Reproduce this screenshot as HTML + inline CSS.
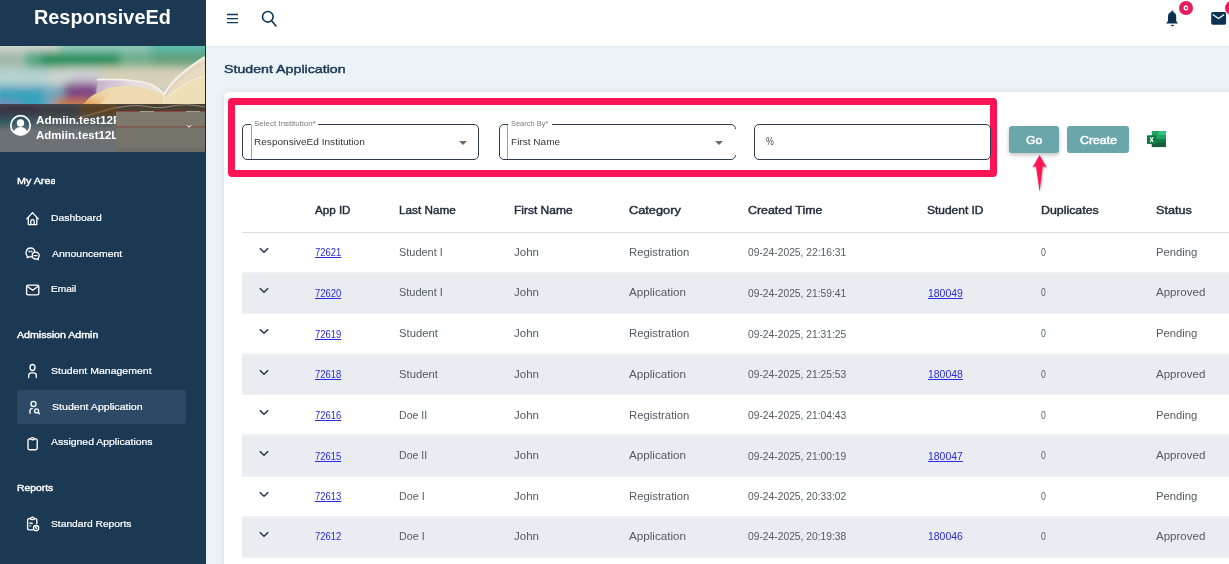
<!DOCTYPE html>
<html><head><meta charset="utf-8"><title>Student Application</title>
<style>
html,body{margin:0;padding:0}
body{width:1229px;height:564px;overflow:hidden;position:relative;background:#ebf3f7;font-family:'Liberation Sans',sans-serif}
.a{position:absolute}
.t{position:absolute;white-space:nowrap;line-height:1em;font-family:'Liberation Sans',sans-serif}
#side{left:0;top:0;width:206px;height:564px;background:#1c3954}
#hero{left:0;top:46px;width:205px;height:106px;overflow:hidden;background:#c9cfc6}
#hero .b{position:absolute;filter:blur(5px)}
#hdr{left:206px;top:0;width:1023px;height:46px;background:#fff;box-shadow:0 1px 1.5px rgba(0,0,0,.045)}
#card{left:224px;top:92px;width:1100px;height:600px;background:#fff;border-radius:5px;box-shadow:0 0 7px rgba(0,0,0,.09)}
#red{left:227.6px;top:97.8px;width:755.8px;height:65.3px;border:7.5px solid #ff1352;border-radius:4px}
.inp{position:absolute;border:1.3px solid #2f3b4c;border-radius:5px;box-sizing:border-box;background:#fff}
.btn{position:absolute;background:#6aa6ac;border-radius:3px;box-shadow:0 2px 4px rgba(0,0,0,.25)}
.row{position:absolute;left:242px;width:990px;background:#e9edf1;border-top:1px solid #f1f3f5;border-bottom:1px solid #f1f3f5;box-sizing:border-box}

</style></head><body>
<div id="side" class="a"></div>
<svg id="hero" class="a" style="left:0;top:46px" width="205" height="106" viewBox="0 0 205 106">
 <defs>
  <filter id="bl" x="-20%" y="-20%" width="140%" height="140%"><feGaussianBlur stdDeviation="4.5"/></filter>
  <filter id="bl2" x="-20%" y="-20%" width="140%" height="140%"><feGaussianBlur stdDeviation="3"/></filter>
  <linearGradient id="og" x1="0" y1="1" x2="0.6" y2="0"><stop offset="0" stop-color="#e4a050"/><stop offset="1" stop-color="#efdab0" stop-opacity="0"/></linearGradient>
  <linearGradient id="lav" x1="0" y1="0" x2="1" y2="0"><stop offset="0" stop-color="#c8b2cc"/><stop offset=".55" stop-color="#e6dbe0"/><stop offset="1" stop-color="#f0e4cc"/></linearGradient>
  <filter id="bl1"><feGaussianBlur stdDeviation=".5"/></filter>
 </defs>
 <rect width="205" height="106" fill="#c3cfc8"/>
 <g filter="url(#bl)">
  <rect x="-10" y="-10" width="80" height="18" fill="#d3d8d2"/>
  <rect x="60" y="-10" width="160" height="16" fill="#8fcbbb"/>
  <rect x="150" y="-10" width="70" height="16" fill="#5cbcac"/>
  <rect x="-10" y="5" width="32" height="17" fill="#a3b8a8"/>
  <rect x="24" y="5" width="40" height="17" fill="#5aa884"/>
  <rect x="40" y="6" width="85" height="15" fill="#23905c"/>
  <rect x="120" y="5" width="34" height="16" fill="#6fae8c"/>
  <rect x="152" y="6" width="60" height="15" fill="#62a07c"/>
  <rect x="-10" y="22" width="62" height="20" fill="#b6d2d0"/>
  <rect x="50" y="22" width="50" height="18" fill="#cdd6cf"/>
  <rect x="72" y="30" width="30" height="12" fill="#cbbfd6"/>
  <rect x="100" y="21" width="110" height="22" fill="#d6d1b8"/>
  <rect x="-10" y="40" width="60" height="26" fill="#38a2bc"/>
  <rect x="-10" y="56" width="30" height="10" fill="#7a88b8"/>
  <rect x="44" y="40" width="20" height="22" fill="#6ea6bb"/>
  <rect x="64" y="37" width="36" height="18" fill="#7d4585"/>
  <rect x="54" y="53" width="40" height="10" fill="#c8742e"/>
  <rect x="-10" y="0" width="3" height="60" fill="#e0d0b0"/>
 </g>
 <!-- book -->
 <g filter="url(#bl1)">
  <path d="M84 58 C90 50 96 46 112 41 C130 38 150 42 164 49 L164 58 Z" fill="#efdab0"/>
  <path d="M98 34 C120 33 142 35 152 39 C158 42 162 46 164 49 C150 42 130 38 112 41 C104 43 99 45 96 47 Z" fill="url(#lav)"/>
  <path d="M97 33.6 C122 33 143 34.5 152.5 39 C158 42 162 46 164 49" fill="none" stroke="#f6f2f2" stroke-width="1.6"/>
  <path d="M164 49 C170 36 184 24 205 11 L205 58 L164 58 Z" fill="#e7dcc0"/>
  <path d="M166 52 C172 44 185 36 205 30 L205 58 L166 58 Z" fill="#efdfb6"/>
  <path d="M164 49 C170 36 184 24 204.5 11" fill="none" stroke="#f7f3f0" stroke-width="1.8"/>
  <path d="M165.5 50 C172 38 186 27 205 16" fill="none" stroke="#e3b6b0" stroke-width=".7"/>
  <path d="M167 53 C174 44 186 36 205 29.5" fill="none" stroke="#f3efe8" stroke-width="1"/>
  <path d="M164 49 L164.5 58" stroke="#f8f0e0" stroke-width="1"/>
  <path d="M84 58 C90 50 96 46 112 41 L118 41 L100 58 Z" fill="url(#og)"/>
 </g>
 <!-- lower (under overlay), final colors -->
 <rect x="0" y="58" width="205" height="48" fill="#6c7176"/>
 <clipPath id="lowclip"><rect x="0" y="58" width="205" height="48"/></clipPath>
 <g clip-path="url(#lowclip)"><g filter="url(#bl2)">
  <rect x="-5" y="56" width="45" height="17" fill="#3b3547"/>
  <rect x="38" y="56" width="45" height="17" fill="#3a3c42"/>
  <rect x="80" y="56" width="40" height="17" fill="#5a4124"/>
  <rect x="-5" y="71" width="40" height="9" fill="#2f5a62"/>
  <rect x="33" y="71" width="85" height="9" fill="#4b585c"/>
 </g></g>
 <path d="M75 72 L118 60 L118 62 L78 73 Z" fill="#8a6a40" opacity=".7"/>
 <rect x="116" y="58" width="89" height="8" fill="#4a4034"/>
 <path d="M116 62 C130 59 140 59 150 61 C160 63 170 60 180 59 C190 58 198 60 205 61" fill="none" stroke="#8f8a7c" stroke-width="1"/>
 <rect x="116" y="65" width="89" height="1.2" fill="#8c4a3c"/>
 <rect x="140" y="65" width="14" height="1.2" fill="#a7a092"/>
 <rect x="186" y="65" width="14" height="1.2" fill="#a7a092"/>
 <rect x="116" y="66" width="89" height="14.5" fill="#7c786c"/>
 <rect x="116" y="80.3" width="89" height="1.3" fill="#8a4b38"/>
 <rect x="116" y="81.6" width="89" height="20.5" fill="#76736b"/>
 <rect x="116" y="102" width="89" height="4" fill="#6f6c68"/>
</svg>
<div id="hdr" class="a"></div>
<!-- hero overlay -->
<div class="a" style="left:205px;top:46px;width:1px;height:106px;background:#0f2740"></div>
<svg class="a" style="left:8px;top:113px" width="25" height="25" viewBox="0 0 25 25">
 <defs><clipPath id="av"><circle cx="12.5" cy="12.4" r="9.7"/></clipPath></defs>
 <circle cx="12.5" cy="12.4" r="9.7" fill="none" stroke="#fff" stroke-width="1.7"/>
 <circle cx="12.5" cy="10" r="3.7" fill="#fff"/>
 <ellipse cx="12.5" cy="21" rx="7.3" ry="7" fill="#fff" clip-path="url(#av)"/>
</svg>
<svg class="a" style="left:185px;top:123px" width="8" height="6" viewBox="0 0 8 6"><path d="M2 2 L4.2 4.3 L6.4 2" fill="none" stroke="#fff" stroke-width="1"/></svg>
<!-- active nav -->
<div class="a" style="left:17px;top:390px;width:169px;height:34px;background:#2c4965;border-radius:3px"></div>
<!-- nav icons -->
<svg class="a" style="left:22px;top:208px" width="22" height="22" viewBox="0 0 22 22" fill="none" stroke="#fff" stroke-width="1.3" stroke-linejoin="round" stroke-linecap="round">
 <path d="M4.8 10.9 L10.5 4.6 L16.3 10.9"/><path d="M6.3 9.6 V16.6 H14.8 V9.6"/><path d="M8.8 16.6 V13.4 A1.7 1.7 0 0 1 12.2 13.4 V16.6"/>
</svg>
<svg class="a" style="left:22px;top:244px" width="22" height="22" viewBox="0 0 22 22" fill="none" stroke="#fff" stroke-width="1.3" stroke-linejoin="round" stroke-linecap="round">
 <path d="M10.2 12.6 C8.2 13.2 6.8 13 5.4 12.9 L5.3 13.6 L5 11.6 C3.8 10.4 3.9 8.8 4.2 7.6 C4.8 5.2 7 4 8.6 4 C10.8 4 12.8 5.6 12.9 8"/>
 <circle cx="7.4" cy="7.5" r=".35" fill="#fff"/><circle cx="9.6" cy="7.5" r=".35" fill="#fff"/>
 <path d="M13.6 8.2 C15.8 8.2 17.3 9.8 17.2 11.8 C17.1 13 16.5 13.8 16.1 14.2 L16.3 15.8 L14.6 14.9 C12.2 15.4 10.2 14 10.2 11.7 C10.2 9.6 11.8 8.2 13.6 8.2 Z"/>
 <path d="M12 11.6 H15"/>
</svg>
<svg class="a" style="left:22px;top:279px" width="22" height="22" viewBox="0 0 22 22" fill="none" stroke="#fff" stroke-width="1.35" stroke-linejoin="round" stroke-linecap="round">
 <rect x="4.6" y="6.1" width="12.2" height="9.7" rx="1.4"/><path d="M5.2 7.2 L10.7 11.3 L16.2 7.2"/>
</svg>
<svg class="a" style="left:22px;top:360px" width="22" height="22" viewBox="0 0 22 22" fill="none" stroke="#fff" stroke-width="1.35" stroke-linecap="round">
 <ellipse cx="10.5" cy="7.5" rx="2.5" ry="3"/><path d="M6.7 17.5 V15.6 C6.7 13.8 7.8 12.8 9.6 12.8 H11.4 C13.2 12.8 14.3 13.8 14.3 15.6 V17.5"/>
</svg>
<svg class="a" style="left:22px;top:396px" width="22" height="22" viewBox="0 0 22 22" fill="none" stroke="#fff" stroke-width="1.35" stroke-linecap="round">
 <circle cx="11.5" cy="7.9" r="2.5"/><path d="M8 17.2 V15 C8 13.6 8.8 12.6 10.2 12.4"/><circle cx="14.6" cy="14.9" r="2"/><path d="M16.1 16.4 L17.5 17.7"/>
</svg>
<svg class="a" style="left:22px;top:433px" width="22" height="22" viewBox="0 0 22 22" fill="none" stroke="#fff" stroke-width="1.35" stroke-linejoin="round">
 <path d="M8.2 5.9 H7.4 C6.6 5.9 6 6.5 6 7.3 V15.3 C6 16.1 6.6 16.7 7.4 16.7 H13.8 C14.6 16.7 15.2 16.1 15.2 15.3 V7.3 C15.2 6.5 14.6 5.9 13.8 5.9 H12.6"/>
 <path d="M8.2 5.9 C8.6 5.5 9.2 5.3 9.4 5 C9.8 4.4 11.4 4.4 11.8 5 C12 5.3 12.4 5.6 12.6 5.9 C12 7 9 7 8.2 5.9 Z"/>
</svg>
<svg class="a" style="left:22px;top:513px" width="22" height="22" viewBox="0 0 22 22" fill="none" stroke="#fff" stroke-width="1.35" stroke-linejoin="round" stroke-linecap="round">
 <path d="M8 5.6 H7 C6.2 5.6 5.6 6.2 5.6 7 V15.4 C5.6 16.2 6.2 16.8 7 16.8 H10.8"/><path d="M12.8 5.6 H13.6 C14.4 5.6 14.8 6.2 14.8 7 V10.8"/>
 <path d="M8 5.6 C8.4 5.2 8.9 5 9.2 4.6 C9.7 4 11.2 4 11.6 4.6 C11.9 5 12.4 5.2 12.8 5.6 C12.2 6.8 8.6 6.8 8 5.6 Z"/>
 <path d="M7.9 10.2 H10.2"/><path d="M7.9 12.8 H8.6"/>
 <circle cx="14.1" cy="15.1" r="2.6"/><path d="M13.6 13.9 L14.4 15.3"/>
</svg>
<!-- header icons -->
<svg class="a" style="left:222px;top:8px" width="20" height="20" viewBox="0 0 20 20" stroke="#0d3556" stroke-width="1.3">
 <path d="M5 6.5 H16 M5 10.6 H16 M5 14.6 H16"/>
</svg>
<svg class="a" style="left:258px;top:7px" width="22" height="22" viewBox="0 0 22 22" fill="none" stroke="#0d3556" stroke-width="1.6" stroke-linecap="round">
 <circle cx="9.8" cy="9.8" r="5.3"/><path d="M13.8 14 L18 19"/>
</svg>
<svg class="a" style="left:1160px;top:0" width="30" height="30" viewBox="0 0 30 30">
 <path fill="#0b3350" d="M12.5 10.4 C13.1 10.4 13.5 10.9 13.5 11.4 L13.4 12.3 C15.2 12.8 16.2 14.3 16.2 16.5 V20 C16.2 21.2 16.8 22.1 18.1 23.4 H6 C7.4 22.1 8 21.2 8 20 V16.5 C8 14.3 9 12.8 10.8 12.3 L11.5 11.4 C11.5 10.9 11.9 10.4 12.5 10.4 Z"/>
 <ellipse cx="12.5" cy="25.5" rx="1.6" ry=".7" fill="#0b3350"/>
</svg>
<svg class="a" style="left:1205px;top:6px" width="24" height="24" viewBox="0 0 24 24">
 <rect x="6.2" y="6" width="14.9" height="12.7" rx="1.6" fill="#0b3350"/>
 <path d="M7.8 8.4 L13.5 12.6 L19.2 8.4" fill="none" stroke="#fff" stroke-width="1.2"/>
</svg>
<div class="a" style="left:1179px;top:1.3px;width:13.8px;height:13.8px;border-radius:50%;background:#e91b5f"></div>
<div class="a" style="left:1225px;top:1.3px;width:13.8px;height:13.8px;border-radius:50%;background:#e91b5f"></div>
<svg class="a" style="left:1179px;top:1.3px" width="14" height="14" viewBox="0 0 14 14"><ellipse cx="6.9" cy="6.9" rx="1.7" ry="1.9" fill="none" stroke="#fff" stroke-width="1.3"/></svg>
<!-- excel -->
<svg class="a" style="z-index:5;left:1147px;top:130.6px" width="20" height="17" viewBox="0 0 20 17">
 <rect x="4.8" y="0" width="14.2" height="16.1" rx=".6" fill="#21a366"/>
 <rect x="11.8" y="0" width="7.2" height="4" fill="#33c481"/>
 <rect x="4.8" y="8" width="14.2" height="4" fill="#107c41"/>
 <rect x="4.8" y="12" width="14.2" height="4.1" fill="#185c37"/>
 <rect x="0" y="4.2" width="9.3" height="8.9" rx=".6" fill="#107c41"/>
 <path d="M3.2 6.4 L6.1 10.9 M6.1 6.4 L3.2 10.9" stroke="#fff" stroke-width="1.1"/>
</svg>
<!-- arrow -->
<svg class="a" style="z-index:5;left:1030px;top:154px;filter:drop-shadow(1px 1px 1px rgba(0,0,0,.25))" width="20" height="40" viewBox="0 0 20 40">
 <path fill="#ff1654" d="M9.5 1.1 L16.7 13.4 L12.9 12.2 L9.6 37.7 L5.9 12.2 L2.5 13.4 Z"/>
</svg>

<div id="card" class="a"></div>
<div id="red" class="a"></div>
<!-- input 1 -->
<div class="inp" style="left:242.4px;top:124.3px;width:236.4px;height:35.5px"></div>
<div class="a" style="left:251px;top:120px;width:67px;height:6px;background:#fff"></div>
<div class="a" style="left:251.2px;top:125px;width:1px;height:34px;background:#9aa3ad"></div>
<!-- input 2 -->
<div class="inp" style="left:498.5px;top:124.3px;width:237px;height:35.5px"></div>
<div class="a" style="left:733.5px;top:129px;width:3px;height:26px;background:#fff"></div>
<div class="a" style="left:507.5px;top:120px;width:44px;height:6px;background:#fff"></div>
<div class="a" style="left:507.3px;top:125px;width:1px;height:34px;background:#9aa3ad"></div>
<!-- input 3 -->
<div class="inp" style="left:754.1px;top:124.1px;width:236.7px;height:35.5px"></div>
<!-- dropdown carets -->
<div class="a" style="left:459.2px;top:141px;width:0;height:0;border-left:4px solid transparent;border-right:4px solid transparent;border-top:4px solid #6b6b6b"></div>
<div class="a" style="left:715.3px;top:141px;width:0;height:0;border-left:4px solid transparent;border-right:4px solid transparent;border-top:4px solid #6b6b6b"></div>
<!-- buttons -->
<div class="btn" style="left:1008.7px;top:126px;width:50px;height:26.8px"></div>
<div class="btn" style="left:1067.1px;top:126px;width:61.8px;height:26.8px;box-shadow:0 0 6px rgba(0,0,0,.06)"></div>
<!-- table -->
<div class="a" style="left:242px;top:232px;width:990px;height:1.2px;background:#dadee3"></div>
<div class="a" style="left:242px;top:271.93px;width:990px;height:1px;background:#eef0f3"></div>
<svg class="a" style="left:258px;top:246.80px" width="12" height="8" viewBox="0 0 12 8"><path d="M1.8 1.3 L6 5.3 L10.2 1.3" fill="none" stroke="#24344a" stroke-width="1.5"/></svg>
<div class="row" style="top:272.83px;height:41.23px"></div>
<svg class="a" style="left:258px;top:287.43px" width="12" height="8" viewBox="0 0 12 8"><path d="M1.8 1.3 L6 5.3 L10.2 1.3" fill="none" stroke="#24344a" stroke-width="1.5"/></svg>
<div class="a" style="left:242px;top:353.19px;width:990px;height:1px;background:#eef0f3"></div>
<svg class="a" style="left:258px;top:328.06px" width="12" height="8" viewBox="0 0 12 8"><path d="M1.8 1.3 L6 5.3 L10.2 1.3" fill="none" stroke="#24344a" stroke-width="1.5"/></svg>
<div class="row" style="top:354.09px;height:41.23px"></div>
<svg class="a" style="left:258px;top:368.69px" width="12" height="8" viewBox="0 0 12 8"><path d="M1.8 1.3 L6 5.3 L10.2 1.3" fill="none" stroke="#24344a" stroke-width="1.5"/></svg>
<div class="a" style="left:242px;top:434.45px;width:990px;height:1px;background:#eef0f3"></div>
<svg class="a" style="left:258px;top:409.32px" width="12" height="8" viewBox="0 0 12 8"><path d="M1.8 1.3 L6 5.3 L10.2 1.3" fill="none" stroke="#24344a" stroke-width="1.5"/></svg>
<div class="row" style="top:435.35px;height:41.23px"></div>
<svg class="a" style="left:258px;top:449.95px" width="12" height="8" viewBox="0 0 12 8"><path d="M1.8 1.3 L6 5.3 L10.2 1.3" fill="none" stroke="#24344a" stroke-width="1.5"/></svg>
<div class="a" style="left:242px;top:515.71px;width:990px;height:1px;background:#eef0f3"></div>
<svg class="a" style="left:258px;top:490.58px" width="12" height="8" viewBox="0 0 12 8"><path d="M1.8 1.3 L6 5.3 L10.2 1.3" fill="none" stroke="#24344a" stroke-width="1.5"/></svg>
<div class="row" style="top:516.61px;height:41.23px"></div>
<svg class="a" style="left:258px;top:531.21px" width="12" height="8" viewBox="0 0 12 8"><path d="M1.8 1.3 L6 5.3 L10.2 1.3" fill="none" stroke="#24344a" stroke-width="1.5"/></svg>

<div class="t" style="left:33.60px;top:7.99px;font-size:19.5px;font-weight:700;color:#ffffff;"><span style="display:inline-block;transform:scaleX(1.0179);transform-origin:0 0;">ResponsiveEd</span></div>
<div class="t" style="left:36.10px;top:115.29px;font-size:11px;font-weight:700;color:#ffffff;width:79.5px;overflow:hidden;"><span style="display:inline-block;transform:scaleX(1.0690);transform-origin:0 0;">Admiin.test12F</span></div>
<div class="t" style="left:36.10px;top:129.59px;font-size:11px;font-weight:700;color:#ffffff;width:79.5px;overflow:hidden;"><span style="display:inline-block;transform:scaleX(1.0436);transform-origin:0 0;">Admiin.test12L</span></div>
<div class="t" style="left:17.00px;top:177.43px;font-size:9.3px;font-weight:400;color:#ffffff;width:37.5px;overflow:hidden;"><span style="display:inline-block;transform:scaleX(1.1551);transform-origin:0 0;-webkit-text-stroke:.4px #fff;">My Area</span></div>
<div class="t" style="left:51.40px;top:212.87px;font-size:9.6px;font-weight:400;color:#ffffff;"><span style="display:inline-block;transform:scaleX(1.0802);transform-origin:0 0;-webkit-text-stroke:.2px #fff;">Dashboard</span></div>
<div class="t" style="left:51.50px;top:249.07px;font-size:9.6px;font-weight:400;color:#ffffff;"><span style="display:inline-block;transform:scaleX(1.0876);transform-origin:0 0;-webkit-text-stroke:.2px #fff;">Announcement</span></div>
<div class="t" style="left:51.10px;top:283.87px;font-size:9.6px;font-weight:400;color:#ffffff;"><span style="display:inline-block;transform:scaleX(1.0542);transform-origin:0 0;-webkit-text-stroke:.2px #fff;">Email</span></div>
<div class="t" style="left:17.00px;top:331.03px;font-size:9.3px;font-weight:400;color:#ffffff;"><span style="display:inline-block;transform:scaleX(1.1401);transform-origin:0 0;-webkit-text-stroke:.4px #fff;">Admission Admin</span></div>
<div class="t" style="left:51.20px;top:366.27px;font-size:9.6px;font-weight:400;color:#ffffff;"><span style="display:inline-block;transform:scaleX(1.0965);transform-origin:0 0;-webkit-text-stroke:.2px #fff;">Student Management</span></div>
<div class="t" style="left:52.10px;top:401.87px;font-size:9.6px;font-weight:400;color:#ffffff;"><span style="display:inline-block;transform:scaleX(1.1028);transform-origin:0 0;-webkit-text-stroke:.2px #fff;">Student Application</span></div>
<div class="t" style="left:51.20px;top:437.47px;font-size:9.6px;font-weight:400;color:#ffffff;"><span style="display:inline-block;transform:scaleX(1.0884);transform-origin:0 0;-webkit-text-stroke:.2px #fff;">Assigned Applications</span></div>
<div class="t" style="left:17.10px;top:483.63px;font-size:9.3px;font-weight:400;color:#ffffff;"><span style="display:inline-block;transform:scaleX(1.1148);transform-origin:0 0;-webkit-text-stroke:.4px #fff;">Reports</span></div>
<div class="t" style="left:51.30px;top:518.87px;font-size:9.6px;font-weight:400;color:#ffffff;"><span style="display:inline-block;transform:scaleX(1.0691);transform-origin:0 0;-webkit-text-stroke:.2px #fff;">Standard Reports</span></div>
<div class="t" style="left:224.40px;top:64.13px;font-size:11.3px;font-weight:400;color:#1d3a56;"><span style="display:inline-block;transform:scaleX(1.2571);transform-origin:0 0;-webkit-text-stroke:.45px #1d3a56;">Student Application</span></div>
<div class="t" style="left:253.60px;top:119.97px;font-size:7px;font-weight:400;color:#7a7a7a;"><span style="display:inline-block;transform:scaleX(1.1425);transform-origin:0 0;">Select Institution*</span></div>
<div class="t" style="left:253.60px;top:137.83px;font-size:9.3px;font-weight:400;color:#333333;"><span style="display:inline-block;transform:scaleX(1.0828);transform-origin:0 0;">ResponsiveEd Institution</span></div>
<div class="t" style="left:510.60px;top:119.97px;font-size:7px;font-weight:400;color:#7a7a7a;"><span style="display:inline-block;transform:scaleX(1.0648);transform-origin:0 0;">Search By*</span></div>
<div class="t" style="left:510.60px;top:137.83px;font-size:9.3px;font-weight:400;color:#333333;"><span style="display:inline-block;transform:scaleX(1.0821);transform-origin:0 0;">First Name</span></div>
<div class="t" style="left:765.60px;top:136.63px;font-size:10px;font-weight:400;color:#444444;"><span style="display:inline-block;transform:scaleX(0.8758);transform-origin:0 0;">%</span></div>
<div class="t" style="left:1025.90px;top:134.91px;font-size:10.5px;font-weight:400;color:#ffffff;"><span style="display:inline-block;transform:scaleX(1.1701);transform-origin:0 0;-webkit-text-stroke:.45px #fff;">Go</span></div>
<div class="t" style="left:1079.60px;top:134.91px;font-size:10.5px;font-weight:400;color:#ffffff;"><span style="display:inline-block;transform:scaleX(1.1740);transform-origin:0 0;-webkit-text-stroke:.45px #fff;">Create</span></div>
<div class="t" style="left:314.90px;top:206.44px;font-size:10px;font-weight:400;color:#1f2b3a;"><span style="display:inline-block;transform:scaleX(1.1610);transform-origin:0 0;-webkit-text-stroke:.4px #1f2b3a;">App ID</span></div>
<div class="t" style="left:399.00px;top:206.44px;font-size:10px;font-weight:400;color:#1f2b3a;"><span style="display:inline-block;transform:scaleX(1.1725);transform-origin:0 0;-webkit-text-stroke:.4px #1f2b3a;">Last Name</span></div>
<div class="t" style="left:513.60px;top:206.44px;font-size:10px;font-weight:400;color:#1f2b3a;"><span style="display:inline-block;transform:scaleX(1.1982);transform-origin:0 0;-webkit-text-stroke:.4px #1f2b3a;">First Name</span></div>
<div class="t" style="left:629.40px;top:206.44px;font-size:10px;font-weight:400;color:#1f2b3a;"><span style="display:inline-block;transform:scaleX(1.2765);transform-origin:0 0;-webkit-text-stroke:.4px #1f2b3a;">Category</span></div>
<div class="t" style="left:747.60px;top:206.44px;font-size:10px;font-weight:400;color:#1f2b3a;"><span style="display:inline-block;transform:scaleX(1.2394);transform-origin:0 0;-webkit-text-stroke:.4px #1f2b3a;">Created Time</span></div>
<div class="t" style="left:927.40px;top:206.44px;font-size:10px;font-weight:400;color:#1f2b3a;"><span style="display:inline-block;transform:scaleX(1.1954);transform-origin:0 0;-webkit-text-stroke:.4px #1f2b3a;">Student ID</span></div>
<div class="t" style="left:1040.80px;top:206.44px;font-size:10px;font-weight:400;color:#1f2b3a;"><span style="display:inline-block;transform:scaleX(1.2355);transform-origin:0 0;-webkit-text-stroke:.4px #1f2b3a;">Duplicates</span></div>
<div class="t" style="left:1156.20px;top:206.44px;font-size:10px;font-weight:400;color:#1f2b3a;"><span style="display:inline-block;transform:scaleX(1.2624);transform-origin:0 0;-webkit-text-stroke:.4px #1f2b3a;">Status</span></div>
<div class="t" style="left:314.60px;top:247.23px;font-size:10.6px;font-weight:400;color:#2a2ae0;"><span style="display:inline-block;transform:scaleX(0.8925);transform-origin:0 0;text-decoration:underline;">72621</span></div>
<div class="t" style="left:399.00px;top:247.73px;font-size:10px;font-weight:400;color:#555b63;"><span style="display:inline-block;transform:scaleX(1.0941);transform-origin:0 0;">Student I</span></div>
<div class="t" style="left:513.60px;top:247.73px;font-size:10px;font-weight:400;color:#555b63;"><span style="display:inline-block;transform:scaleX(1.1527);transform-origin:0 0;">John</span></div>
<div class="t" style="left:629.40px;top:247.73px;font-size:10px;font-weight:400;color:#555b63;"><span style="display:inline-block;transform:scaleX(1.1319);transform-origin:0 0;">Registration</span></div>
<div class="t" style="left:747.60px;top:247.23px;font-size:10.6px;font-weight:400;color:#555b63;"><span style="display:inline-block;transform:scaleX(0.9701);transform-origin:0 0;">09-24-2025, 22:16:31</span></div>
<div class="t" style="left:1041.10px;top:247.73px;font-size:10px;font-weight:400;color:#555b63;"><span style="display:inline-block;transform:scaleX(0.8629);transform-origin:0 0;">0</span></div>
<div class="t" style="left:1156.20px;top:247.73px;font-size:10px;font-weight:400;color:#555b63;"><span style="display:inline-block;transform:scaleX(1.1280);transform-origin:0 0;">Pending</span></div>
<div class="t" style="left:314.60px;top:287.93px;font-size:10.6px;font-weight:400;color:#2a2ae0;"><span style="display:inline-block;transform:scaleX(0.8925);transform-origin:0 0;text-decoration:underline;">72620</span></div>
<div class="t" style="left:399.00px;top:288.44px;font-size:10px;font-weight:400;color:#555b63;"><span style="display:inline-block;transform:scaleX(1.0941);transform-origin:0 0;">Student I</span></div>
<div class="t" style="left:513.60px;top:288.44px;font-size:10px;font-weight:400;color:#555b63;"><span style="display:inline-block;transform:scaleX(1.1527);transform-origin:0 0;">John</span></div>
<div class="t" style="left:629.40px;top:288.44px;font-size:10px;font-weight:400;color:#555b63;"><span style="display:inline-block;transform:scaleX(1.1672);transform-origin:0 0;">Application</span></div>
<div class="t" style="left:747.60px;top:287.93px;font-size:10.6px;font-weight:400;color:#555b63;"><span style="display:inline-block;transform:scaleX(0.9701);transform-origin:0 0;">09-24-2025, 21:59:41</span></div>
<div class="t" style="left:927.60px;top:287.93px;font-size:10.6px;font-weight:400;color:#2a2ae0;"><span style="display:inline-block;transform:scaleX(0.9842);transform-origin:0 0;text-decoration:underline;">180049</span></div>
<div class="t" style="left:1041.10px;top:288.44px;font-size:10px;font-weight:400;color:#555b63;"><span style="display:inline-block;transform:scaleX(0.8629);transform-origin:0 0;">0</span></div>
<div class="t" style="left:1156.20px;top:288.44px;font-size:10px;font-weight:400;color:#555b63;"><span style="display:inline-block;transform:scaleX(1.1515);transform-origin:0 0;">Approved</span></div>
<div class="t" style="left:314.60px;top:328.63px;font-size:10.6px;font-weight:400;color:#2a2ae0;"><span style="display:inline-block;transform:scaleX(0.8925);transform-origin:0 0;text-decoration:underline;">72619</span></div>
<div class="t" style="left:399.00px;top:329.13px;font-size:10px;font-weight:400;color:#555b63;"><span style="display:inline-block;transform:scaleX(1.1251);transform-origin:0 0;">Student</span></div>
<div class="t" style="left:513.60px;top:329.13px;font-size:10px;font-weight:400;color:#555b63;"><span style="display:inline-block;transform:scaleX(1.1527);transform-origin:0 0;">John</span></div>
<div class="t" style="left:629.40px;top:329.13px;font-size:10px;font-weight:400;color:#555b63;"><span style="display:inline-block;transform:scaleX(1.1319);transform-origin:0 0;">Registration</span></div>
<div class="t" style="left:747.60px;top:328.63px;font-size:10.6px;font-weight:400;color:#555b63;"><span style="display:inline-block;transform:scaleX(0.9701);transform-origin:0 0;">09-24-2025, 21:31:25</span></div>
<div class="t" style="left:1041.10px;top:329.13px;font-size:10px;font-weight:400;color:#555b63;"><span style="display:inline-block;transform:scaleX(0.8629);transform-origin:0 0;">0</span></div>
<div class="t" style="left:1156.20px;top:329.13px;font-size:10px;font-weight:400;color:#555b63;"><span style="display:inline-block;transform:scaleX(1.1280);transform-origin:0 0;">Pending</span></div>
<div class="t" style="left:314.60px;top:369.43px;font-size:10.6px;font-weight:400;color:#2a2ae0;"><span style="display:inline-block;transform:scaleX(0.8925);transform-origin:0 0;text-decoration:underline;">72618</span></div>
<div class="t" style="left:399.00px;top:369.94px;font-size:10px;font-weight:400;color:#555b63;"><span style="display:inline-block;transform:scaleX(1.1251);transform-origin:0 0;">Student</span></div>
<div class="t" style="left:513.60px;top:369.94px;font-size:10px;font-weight:400;color:#555b63;"><span style="display:inline-block;transform:scaleX(1.1527);transform-origin:0 0;">John</span></div>
<div class="t" style="left:629.40px;top:369.94px;font-size:10px;font-weight:400;color:#555b63;"><span style="display:inline-block;transform:scaleX(1.1672);transform-origin:0 0;">Application</span></div>
<div class="t" style="left:747.60px;top:369.43px;font-size:10.6px;font-weight:400;color:#555b63;"><span style="display:inline-block;transform:scaleX(0.9701);transform-origin:0 0;">09-24-2025, 21:25:53</span></div>
<div class="t" style="left:927.60px;top:369.43px;font-size:10.6px;font-weight:400;color:#2a2ae0;"><span style="display:inline-block;transform:scaleX(0.9842);transform-origin:0 0;text-decoration:underline;">180048</span></div>
<div class="t" style="left:1041.10px;top:369.94px;font-size:10px;font-weight:400;color:#555b63;"><span style="display:inline-block;transform:scaleX(0.8629);transform-origin:0 0;">0</span></div>
<div class="t" style="left:1156.20px;top:369.94px;font-size:10px;font-weight:400;color:#555b63;"><span style="display:inline-block;transform:scaleX(1.1515);transform-origin:0 0;">Approved</span></div>
<div class="t" style="left:314.60px;top:410.13px;font-size:10.6px;font-weight:400;color:#2a2ae0;"><span style="display:inline-block;transform:scaleX(0.8925);transform-origin:0 0;text-decoration:underline;">72616</span></div>
<div class="t" style="left:399.00px;top:410.63px;font-size:10px;font-weight:400;color:#555b63;"><span style="display:inline-block;transform:scaleX(1.0567);transform-origin:0 0;">Doe II</span></div>
<div class="t" style="left:513.60px;top:410.63px;font-size:10px;font-weight:400;color:#555b63;"><span style="display:inline-block;transform:scaleX(1.1527);transform-origin:0 0;">John</span></div>
<div class="t" style="left:629.40px;top:410.63px;font-size:10px;font-weight:400;color:#555b63;"><span style="display:inline-block;transform:scaleX(1.1319);transform-origin:0 0;">Registration</span></div>
<div class="t" style="left:747.60px;top:410.13px;font-size:10.6px;font-weight:400;color:#555b63;"><span style="display:inline-block;transform:scaleX(0.9701);transform-origin:0 0;">09-24-2025, 21:04:43</span></div>
<div class="t" style="left:1041.10px;top:410.63px;font-size:10px;font-weight:400;color:#555b63;"><span style="display:inline-block;transform:scaleX(0.8629);transform-origin:0 0;">0</span></div>
<div class="t" style="left:1156.20px;top:410.63px;font-size:10px;font-weight:400;color:#555b63;"><span style="display:inline-block;transform:scaleX(1.1280);transform-origin:0 0;">Pending</span></div>
<div class="t" style="left:314.60px;top:450.73px;font-size:10.6px;font-weight:400;color:#2a2ae0;"><span style="display:inline-block;transform:scaleX(0.8925);transform-origin:0 0;text-decoration:underline;">72615</span></div>
<div class="t" style="left:399.00px;top:451.24px;font-size:10px;font-weight:400;color:#555b63;"><span style="display:inline-block;transform:scaleX(1.0567);transform-origin:0 0;">Doe II</span></div>
<div class="t" style="left:513.60px;top:451.24px;font-size:10px;font-weight:400;color:#555b63;"><span style="display:inline-block;transform:scaleX(1.1527);transform-origin:0 0;">John</span></div>
<div class="t" style="left:629.40px;top:451.24px;font-size:10px;font-weight:400;color:#555b63;"><span style="display:inline-block;transform:scaleX(1.1672);transform-origin:0 0;">Application</span></div>
<div class="t" style="left:747.60px;top:450.73px;font-size:10.6px;font-weight:400;color:#555b63;"><span style="display:inline-block;transform:scaleX(0.9701);transform-origin:0 0;">09-24-2025, 21:00:19</span></div>
<div class="t" style="left:927.60px;top:450.73px;font-size:10.6px;font-weight:400;color:#2a2ae0;"><span style="display:inline-block;transform:scaleX(0.9842);transform-origin:0 0;text-decoration:underline;">180047</span></div>
<div class="t" style="left:1041.10px;top:451.24px;font-size:10px;font-weight:400;color:#555b63;"><span style="display:inline-block;transform:scaleX(0.8629);transform-origin:0 0;">0</span></div>
<div class="t" style="left:1156.20px;top:451.24px;font-size:10px;font-weight:400;color:#555b63;"><span style="display:inline-block;transform:scaleX(1.1515);transform-origin:0 0;">Approved</span></div>
<div class="t" style="left:314.60px;top:491.33px;font-size:10.6px;font-weight:400;color:#2a2ae0;"><span style="display:inline-block;transform:scaleX(0.8925);transform-origin:0 0;text-decoration:underline;">72613</span></div>
<div class="t" style="left:399.00px;top:491.84px;font-size:10px;font-weight:400;color:#555b63;"><span style="display:inline-block;transform:scaleX(1.0792);transform-origin:0 0;">Doe I</span></div>
<div class="t" style="left:513.60px;top:491.84px;font-size:10px;font-weight:400;color:#555b63;"><span style="display:inline-block;transform:scaleX(1.1527);transform-origin:0 0;">John</span></div>
<div class="t" style="left:629.40px;top:491.84px;font-size:10px;font-weight:400;color:#555b63;"><span style="display:inline-block;transform:scaleX(1.1319);transform-origin:0 0;">Registration</span></div>
<div class="t" style="left:747.60px;top:491.33px;font-size:10.6px;font-weight:400;color:#555b63;"><span style="display:inline-block;transform:scaleX(0.9701);transform-origin:0 0;">09-24-2025, 20:33:02</span></div>
<div class="t" style="left:1041.10px;top:491.84px;font-size:10px;font-weight:400;color:#555b63;"><span style="display:inline-block;transform:scaleX(0.8629);transform-origin:0 0;">0</span></div>
<div class="t" style="left:1156.20px;top:491.84px;font-size:10px;font-weight:400;color:#555b63;"><span style="display:inline-block;transform:scaleX(1.1280);transform-origin:0 0;">Pending</span></div>
<div class="t" style="left:314.60px;top:531.13px;font-size:10.6px;font-weight:400;color:#2a2ae0;"><span style="display:inline-block;transform:scaleX(0.8925);transform-origin:0 0;">72612</span></div>
<div class="t" style="left:399.00px;top:531.63px;font-size:10px;font-weight:400;color:#555b63;"><span style="display:inline-block;transform:scaleX(1.0792);transform-origin:0 0;">Doe I</span></div>
<div class="t" style="left:513.60px;top:531.63px;font-size:10px;font-weight:400;color:#555b63;"><span style="display:inline-block;transform:scaleX(1.1527);transform-origin:0 0;">John</span></div>
<div class="t" style="left:629.40px;top:531.63px;font-size:10px;font-weight:400;color:#555b63;"><span style="display:inline-block;transform:scaleX(1.1672);transform-origin:0 0;">Application</span></div>
<div class="t" style="left:747.60px;top:531.13px;font-size:10.6px;font-weight:400;color:#555b63;"><span style="display:inline-block;transform:scaleX(0.9701);transform-origin:0 0;">09-24-2025, 20:19:38</span></div>
<div class="t" style="left:927.60px;top:531.13px;font-size:10.6px;font-weight:400;color:#2a2ae0;"><span style="display:inline-block;transform:scaleX(0.9842);transform-origin:0 0;">180046</span></div>
<div class="t" style="left:1041.10px;top:531.63px;font-size:10px;font-weight:400;color:#555b63;"><span style="display:inline-block;transform:scaleX(0.8629);transform-origin:0 0;">0</span></div>
<div class="t" style="left:1156.20px;top:531.63px;font-size:10px;font-weight:400;color:#555b63;"><span style="display:inline-block;transform:scaleX(1.1515);transform-origin:0 0;">Approved</span></div>
</body></html>
